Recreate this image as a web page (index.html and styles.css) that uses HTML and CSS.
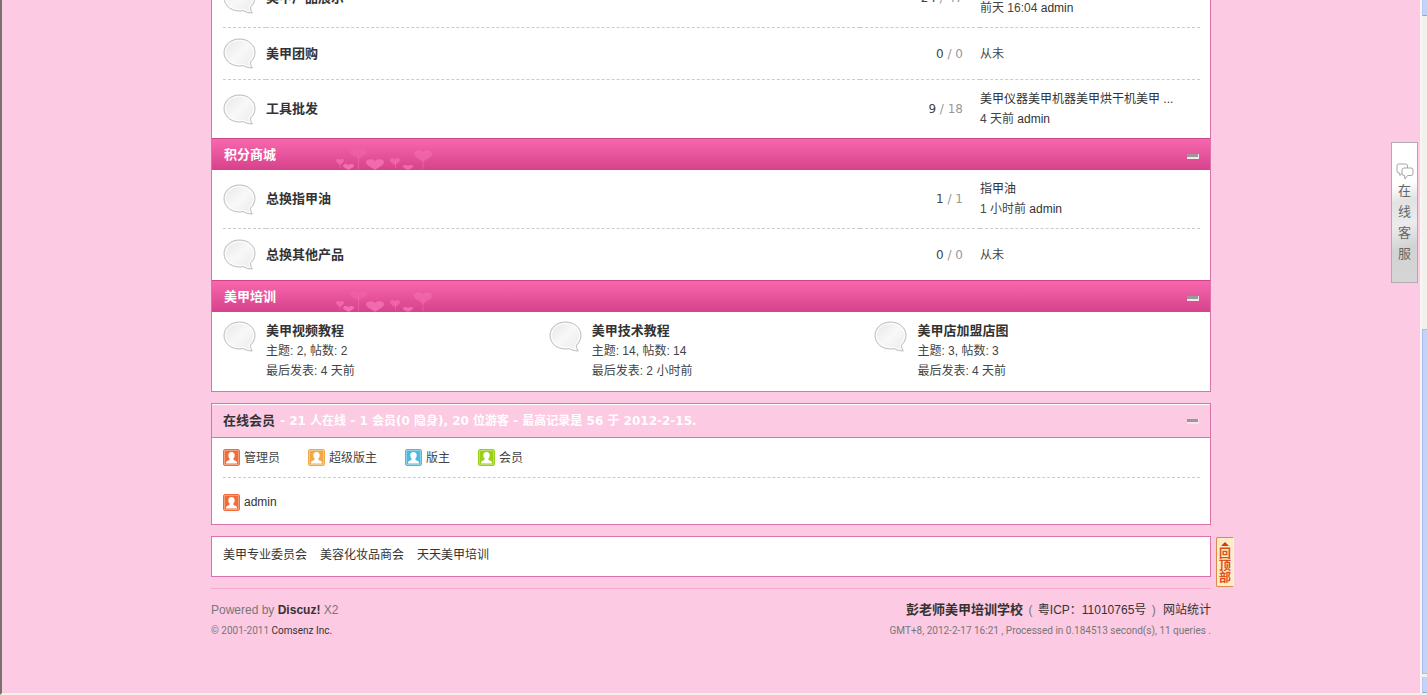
FILE: index.html
```
<!DOCTYPE html>
<html lang="zh-CN">
<head>
    <meta charset="UTF-8">
    <meta name="viewport" content="width=device-width, initial-scale=1.0">
    <title>彭老师美甲培训学校</title>
    <link rel="stylesheet" href="styles.css">
</head>
<body>
    <!-- shared shapes -->
    <svg class="defs" aria-hidden="true">
        <defs>
            <linearGradient id="bubbleFill" x1="0" y1="0" x2="1" y2="1">
                <stop offset="0" stop-color="#e6e6e6"/>
                <stop offset="0.5" stop-color="#f8f8f8"/>
                <stop offset="1" stop-color="#e9e9e9"/>
            </linearGradient>
            <symbol id="bubble" viewBox="0 0 33 31">
                <path d="M16.500 1C25.500 1 32 7 32 14.500C32 18.500 30 22 27.500 24.200C27.500 26.500 28.200 28.500 29.300 30C25.500 29.800 22.500 29.200 20.500 27.700C9 29.500 1 23 1 14.500C1 7 7.500 1 16.500 1Z" fill="url(#bubbleFill)" stroke="#bdbdbd"/>
                <path d="M16.500 2.500C24.500 2.500 30.500 8 30.500 14.500C30.500 18 29 21 26 23.500C26 25.500 26.400 27 27 28.400C24.500 28.200 22.500 27.500 21 26.200C10 28 2.500 22 2.500 14.500C2.500 8 8.500 2.500 16.500 2.500Z" fill="none" stroke="#fff"/>
            </symbol>
            <symbol id="heart" viewBox="0 0 20 18" preserveAspectRatio="none">
                <path d="M10 18C7 14 0 11 0 5.500C0 -0.500 7.500 -1.500 10 3.500C12.500 -1.500 20 -0.500 20 5.500C20 11 13 14 10 18Z" fill="#f873b6"/>
            </symbol>
            <symbol id="hearts" viewBox="0 0 100 22">
                <path d="M4 11V20M22.500 7V21M59.500 11V20M87 8V21" stroke="#f06aac" fill="none" opacity="0.600"/>
                <use href="#heart" x="0" y="11" width="8" height="6" opacity="0.700"/>
                <use href="#heart" x="7" y="16" width="11" height="6" opacity="0.900"/>
                <use href="#heart" x="14" y="1" width="17" height="10" opacity="0.300"/>
                <use href="#heart" x="30" y="11" width="18" height="11" opacity="0.800"/>
                <use href="#heart" x="54" y="10" width="10" height="7" opacity="0.600"/>
                <use href="#heart" x="67" y="17" width="10" height="5" opacity="0.800"/>
                <use href="#heart" x="78" y="2" width="18" height="12" opacity="0.500"/>
            </symbol>
            <symbol id="person" viewBox="0 0 17 17">
                <rect x="0.500" y="0.500" width="16" height="16" rx="1.500" fill="currentColor" stroke="currentColor"/>
                <rect x="1.500" y="1.500" width="14" height="14" fill="none" stroke="#fff" opacity="0.350"/>
                <path d="M8.500 3C10.600 3 11.800 4.500 11.700 6.500C11.600 8 11 9 10.300 9.700C10.300 11 11 11.300 12.500 11.700C13.700 12.100 14 13 14 14.500H3C3 13 3.300 12.100 4.500 11.700C6 11.300 6.700 11 6.700 9.700C6 9 5.400 8 5.300 6.500C5.200 4.500 6.400 3 8.500 3Z" fill="#fff"/>
            </symbol>
        </defs>
    </svg>

    <div class="window">
        <div class="view">
            <div class="wp">
                <div class="bm forum">
                    <table class="fl_tb">
                        <tr>
                            <td class="icn"><svg class="bubble"><use href="#bubble"/></svg></td>
                            <td><a class="name" href="#">美甲产品展示</a></td>
                            <td class="num">24 <span>/ 47</span></td>
                            <td class="by"><a href="#">美甲产品</a><br>前天 16:04 <a href="#">admin</a></td>
                        </tr>
                        <tr class="short">
                            <td class="icn"><svg class="bubble"><use href="#bubble"/></svg></td>
                            <td><a class="name" href="#">美甲团购</a></td>
                            <td class="num">0 <span>/ 0</span></td>
                            <td class="by">从未</td>
                        </tr>
                        <tr class="last">
                            <td class="icn"><svg class="bubble"><use href="#bubble"/></svg></td>
                            <td><a class="name" href="#">工具批发</a></td>
                            <td class="num">9 <span>/ 18</span></td>
                            <td class="by"><a href="#">美甲仪器美甲机器美甲烘干机美甲 ...</a><br>4 天前 <a href="#">admin</a></td>
                        </tr>
                    </table>

                    <div class="bm_h">
                        <h2>积分商城</h2>
                        <svg class="hearts"><use href="#hearts"/></svg>
                        <button class="fold" type="button" aria-label="收起"></button>
                    </div>
                    <table class="fl_tb">
                        <tr>
                            <td class="icn"><svg class="bubble"><use href="#bubble"/></svg></td>
                            <td><a class="name" href="#">总换指甲油</a></td>
                            <td class="num">1 <span>/ 1</span></td>
                            <td class="by"><a href="#">指甲油</a><br>1 小时前 <a href="#">admin</a></td>
                        </tr>
                        <tr class="short">
                            <td class="icn"><svg class="bubble"><use href="#bubble"/></svg></td>
                            <td><a class="name" href="#">总换其他产品</a></td>
                            <td class="num">0 <span>/ 0</span></td>
                            <td class="by">从未</td>
                        </tr>
                    </table>

                    <div class="bm_h">
                        <h2>美甲培训</h2>
                        <svg class="hearts"><use href="#hearts"/></svg>
                        <button class="fold" type="button" aria-label="收起"></button>
                    </div>
                    <div class="fl_g">
                        <div class="cell">
                            <svg class="bubble"><use href="#bubble"/></svg>
                            <div>
                                <a class="name" href="#">美甲视频教程</a>
                                <p>主题: 2, 帖数: 2</p>
                                <p>最后发表: 4 天前</p>
                            </div>
                        </div>
                        <div class="cell">
                            <svg class="bubble"><use href="#bubble"/></svg>
                            <div>
                                <a class="name" href="#">美甲技术教程</a>
                                <p>主题: 14, 帖数: 14</p>
                                <p>最后发表: 2 小时前</p>
                            </div>
                        </div>
                        <div class="cell">
                            <svg class="bubble"><use href="#bubble"/></svg>
                            <div>
                                <a class="name" href="#">美甲店加盟店图</a>
                                <p>主题: 3, 帖数: 3</p>
                                <p>最后发表: 4 天前</p>
                            </div>
                        </div>
                    </div>
                </div>

                <div class="bm online">
                    <div class="online_h">
                        <h3><a href="#">在线会员</a></h3>
                        <span class="stat">- 21 人在线 - 1 会员(0 隐身), 20 位游客 - 最高记录是 56 于 2012-2-15.</span>
                        <button class="fold" type="button" aria-label="收起"></button>
                    </div>
                    <ul class="legend">
                        <li><svg class="person admin"><use href="#person"/></svg>管理员</li>
                        <li><svg class="person super"><use href="#person"/></svg>超级版主</li>
                        <li><svg class="person mod"><use href="#person"/></svg>版主</li>
                        <li><svg class="person member"><use href="#person"/></svg>会员</li>
                    </ul>
                    <ul class="users">
                        <li><svg class="person admin"><use href="#person"/></svg><a href="#">admin</a></li>
                    </ul>
                </div>

                <div class="bm links">
                    <a href="#">美甲专业委员会</a>
                    <a href="#">美容化妆品商会</a>
                    <a href="#">天天美甲培训</a>
                    <a class="totop" href="#"><i></i>回顶部</a>
                </div>

                <footer class="ft">
                    <div>
                        <p>Powered by <a href="#"><b>Discuz!</b></a> X2</p>
                        <p class="small">© 2001-2011 <a href="#">Comsenz Inc.</a></p>
                    </div>
                    <div class="ft_r">
                        <p><a class="site" href="#">彭老师美甲培训学校</a> ( <a class="icp" href="#">粤ICP：11010765号</a> ) <a href="#">网站统计</a></p>
                        <p class="small">GMT+8, 2012-2-17 16:21 , Processed in 0.184513 second(s), 11 queries .</p>
                    </div>
                </footer>
            </div>

            <a class="service" href="#">
                <svg viewBox="0 0 18 17" width="18" height="17" fill="#fff" stroke="#a5a5a5">
                    <path d="M2.500 1H9.500Q11.500 1 11.500 3V8Q11.500 10 9.500 10H6L4 12.500L3.500 10H3Q1 10 1 8V3Q1 1 2.500 1Z"/>
                    <path d="M8 5H15Q17 5 17 7V10.500Q17 12.500 15 12.500H11.500L9 16L8.500 12.500H8Q6 12.500 6 10.500V7Q6 5 8 5Z"/>
                </svg>
                <span>在</span><span>线</span><span>客</span><span>服</span>
            </a>
        </div>

        <div class="scroll">
            <div class="arrow"></div>
            <div class="track"></div>
            <div class="thumb"></div>
            <div class="arrow"></div>
        </div>
    </div>
</body>
</html>
```
FILE: styles.css
```
* {
    box-sizing: border-box;
}

body {
    margin: 0;
    font: 12px/20px "Liberation Sans", "Noto Sans CJK SC", sans-serif;
    color: #444;
    background-color: #fdcae3;
}

a {
    color: #333;
    text-decoration: none;
}

h2, h3, p, ul {
    margin: 0;
    padding: 0;
}

ul {
    list-style: none;
}

.defs {
    position: absolute;
    width: 0;
    height: 0;
}

/* browser frame */
.window {
    display: flex;
    height: 100vh;
    border-left: 2px solid #77736b;
    border-bottom: 2px solid #f3f1ec;
}

.view {
    position: relative;
    flex: 1;
    overflow: hidden;
}

.wp {
    max-width: 1000px;
    margin: 0 auto;
}

.scroll {
    display: flex;
    flex-direction: column;
    width: 7px;
    background-color: #f3f1ec;
    border-left: 2px solid #fbf3f4;
}

.arrow {
    height: 16px;
    background-color: #c3d3fd;
    border-left: 1px solid #b4c6f0;
    border-bottom: 1px solid #8fa6d8;
}

.track {
    flex: 315;
}

.thumb {
    flex: 345;
    margin-bottom: 3px;
    background-color: #c3d3fb;
    border: 1px solid #a9bdec;
    border-right: none;
}

/* boxes */
.bm {
    margin-bottom: 11px;
    background-color: #fff;
    border: 1px solid #d973a9;
}

/* the page is scrolled part way into the first board */
.forum {
    margin-top: -32px;
}

.bm_h {
    display: flex;
    align-items: center;
    height: 32px;
    padding: 0 11px 0 12px;
    background: linear-gradient(#f867ae, #d6428b);
    border-top: 1px solid #cb4788;
}

.bm_h h2 {
    width: 112px;
    font-size: 13px;
    color: #fff;
}

.hearts {
    align-self: flex-end;
    width: 100px;
    height: 22px;
}

.fold {
    width: 12px;
    height: 5px;
    margin-left: auto;
    padding: 0;
    background-color: #999;
    border: 1px solid #f5e4ee;
    border-width: 0 1px 2px 0;
    cursor: pointer;
}

.bm_h .fold {
    margin-top: 3px;
}

/* board list */
.fl_tb {
    width: calc(100% - 21px);
    margin-left: 11px;
    border-spacing: 0;
    table-layout: fixed;
}

.fl_tb td {
    height: 58px;
    padding: 0;
}

.fl_tb .short td {
    height: 52px;
}

.fl_tb .last td {
    height: 59px;
}

.fl_tb tr + tr td {
    border-top: 1px dashed #ccc;
}

.fl_tb .icn {
    width: 43px;
}

.fl_tb .num {
    width: 120px;
    padding-right: 17px;
    font-family: "DejaVu Sans", sans-serif;
    text-align: right;
}

.num span {
    color: #999;
}

.fl_tb .by {
    width: 220px;
}

.bubble {
    display: block;
    flex: none;
    width: 33px;
    height: 31px;
}

.name {
    font-size: 13px;
    font-weight: bold;
}

.fl_g {
    display: flex;
    height: 79px;
    padding: 9px 0 0 11px;
}

.cell {
    display: flex;
    flex: 0 0 33%;
    gap: 10px;
}

/* online members */
.online_h {
    display: flex;
    align-items: center;
    height: 34px;
    padding: 0 11px;
    background-color: #fdcae3;
    border-top: 1px solid #fff;
    border-bottom: 1px solid #d973a9;
}

.online_h h3 {
    margin-right: 5px;
    font-size: 13px;
}

.stat {
    font-family: "DejaVu Sans", "Noto Sans CJK SC", sans-serif;
    font-weight: bold;
    color: #fff;
}

.legend {
    display: flex;
    gap: 28px;
    height: 40px;
    margin: 0 10px 0 11px;
    border-bottom: 1px dashed #ccc;
}

.legend li, .users li {
    display: flex;
    align-items: center;
    gap: 4px;
}

.users {
    padding: 14px 11px 12px;
}

.person {
    width: 17px;
    height: 17px;
}

.person.admin {
    color: #f26c3a;
}

.person.super {
    color: #f0a84a;
}

.person.mod {
    color: #4fb8dc;
}

.person.member {
    color: #97cf1b;
}

/* links */
.links {
    position: relative;
    display: flex;
    gap: 13px;
    padding: 8px 11px 11px;
}

.totop {
    position: absolute;
    top: 0;
    left: calc(100% + 6px);
    width: 18px;
    height: 50px;
    padding: 4px 2px;
    font-size: 12px;
    font-weight: bold;
    line-height: 12px;
    text-align: center;
    color: #d9501e;
    background-color: #fdedc6;
    border: 1px solid #d98a4c;
    border-right-color: #fdf3dc;
    border-radius: 2px;
}

.totop i {
    display: block;
    width: 0;
    margin: 0 auto 2px;
    border: 4px solid transparent;
    border-top: none;
    border-bottom-color: #d03c10;
}

/* footer */
.ft {
    display: flex;
    justify-content: space-between;
    padding-top: 11px;
    color: #777;
    border-top: 1px solid #f5a9cf;
}

.ft_r {
    text-align: right;
}

.ft .site {
    margin-right: 2px;
    font-size: 13px;
    font-weight: bold;
}

.icp {
    margin: 0 2px;
}

.icp + a {
    margin-left: 4px;
}

.small {
    font-family: Roboto, sans-serif;
    font-size: 10px;
    line-height: 22px;
}

/* floating service tab */
.service {
    position: absolute;
    top: 142px;
    right: 2px;
    display: flex;
    flex-direction: column;
    align-items: center;
    width: 27px;
    height: 141px;
    padding-top: 20px;
    line-height: 21px;
    font-size: 13px;
    color: #666;
    background: linear-gradient(165deg, #fff 30%, #e2e2e2 42%, #ececec 58%, #d2d2d2 75%, #d6d6d6);
    border: 1px solid #b5a9b0;
}
```
